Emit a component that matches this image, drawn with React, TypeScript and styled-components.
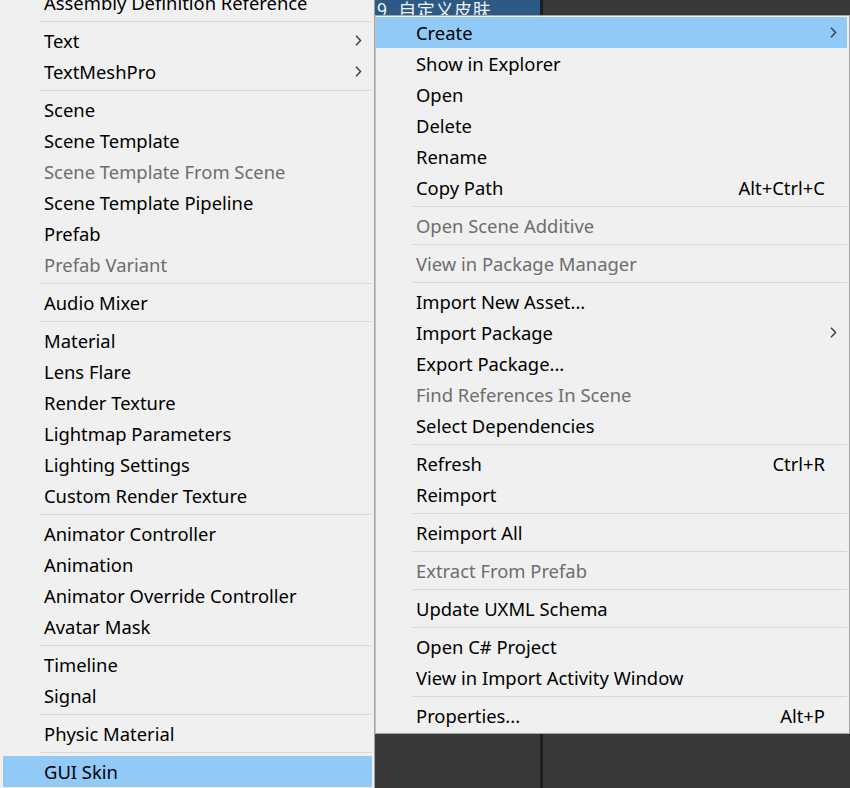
import React from "react";
import styled, { createGlobalStyle } from "styled-components";

const GlobalStyle = createGlobalStyle`
  html, body {
    margin: 0;
    padding: 0;
    background: #383838;
    overflow: hidden;
  }
  * { box-sizing: border-box; }
`;

type Entry =
  | { sep: true }
  | { label: string; disabled?: boolean; shortcut?: string; submenu?: boolean; active?: boolean };

const leftItems: Entry[] = [
  { label: "Assembly Definition Reference" },
  { sep: true },
  { label: "Text", submenu: true },
  { label: "TextMeshPro", submenu: true },
  { sep: true },
  { label: "Scene" },
  { label: "Scene Template" },
  { label: "Scene Template From Scene", disabled: true },
  { label: "Scene Template Pipeline" },
  { label: "Prefab" },
  { label: "Prefab Variant", disabled: true },
  { sep: true },
  { label: "Audio Mixer" },
  { sep: true },
  { label: "Material" },
  { label: "Lens Flare" },
  { label: "Render Texture" },
  { label: "Lightmap Parameters" },
  { label: "Lighting Settings" },
  { label: "Custom Render Texture" },
  { sep: true },
  { label: "Animator Controller" },
  { label: "Animation" },
  { label: "Animator Override Controller" },
  { label: "Avatar Mask" },
  { sep: true },
  { label: "Timeline" },
  { label: "Signal" },
  { sep: true },
  { label: "Physic Material" },
  { sep: true },
  { label: "GUI Skin", active: true },
];

const rightItems: Entry[] = [
  { label: "Create", submenu: true, active: true },
  { label: "Show in Explorer" },
  { label: "Open" },
  { label: "Delete" },
  { label: "Rename" },
  { label: "Copy Path", shortcut: "Alt+Ctrl+C" },
  { sep: true },
  { label: "Open Scene Additive", disabled: true },
  { sep: true },
  { label: "View in Package Manager", disabled: true },
  { sep: true },
  { label: "Import New Asset..." },
  { label: "Import Package", submenu: true },
  { label: "Export Package..." },
  { label: "Find References In Scene", disabled: true },
  { label: "Select Dependencies" },
  { sep: true },
  { label: "Refresh", shortcut: "Ctrl+R" },
  { label: "Reimport" },
  { sep: true },
  { label: "Reimport All" },
  { sep: true },
  { label: "Extract From Prefab", disabled: true },
  { sep: true },
  { label: "Update UXML Schema" },
  { sep: true },
  { label: "Open C# Project" },
  { label: "View in Import Activity Window" },
  { sep: true },
  { label: "Properties...", shortcut: "Alt+P" },
];

const Page = styled.div`
  display: flex;
  width: 850px;
  height: 788px;
  overflow: hidden;
  font-family: "Noto Sans", "Open Sans", sans-serif;
`;

const LeftMenu = styled.div`
  width: 375px;
  flex: none;
  height: 788px;
  overflow: hidden;
  background: #f0f0f0;
  border-right: 1px solid #a3a3a3;
  padding: 0 2px 0 3px;
`;

const MenuList = styled.div<{ $offset: number }>`
  display: flex;
  flex-direction: column;
  margin-top: ${(p) => p.$offset}px;
`;

const RightColumn = styled.div`
  flex: 1;
  display: flex;
  flex-direction: column;
  min-width: 0;
`;

const TopStrip = styled.div`
  height: 15px;
  flex: none;
  display: flex;
  overflow: hidden;
`;

const Tab = styled.div`
  width: 165px;
  background: #2c5a85;
  color: #eef3f8;
  font-family: "Noto Sans CJK SC", "Noto Sans", sans-serif;
  font-size: 18px;
  line-height: 18px;
  letter-spacing: 0.6px;
  word-spacing: 6px;
  padding: 0 0 0 2px;
  white-space: nowrap;
  overflow: hidden;
`;

const Divider = styled.div`
  width: 3px;
  background: #1e1e1e;
`;

const DarkPane = styled.div`
  flex: 1;
  background: #383838;
`;

const RightMenu = styled.div`
  flex: none;
  background: #f0f0f0;
  border: 1px solid #a3a3a3;
  border-left-color: #c4c4c4;
  padding: 1px 2px 2px 0;
  display: flex;
  flex-direction: column;
`;

const BottomArea = styled.div`
  flex: 1;
  display: flex;
`;

const LeftPane = styled.div`
  width: 165px;
  background: #383838;
`;

const Row = styled.div<{ $active?: boolean; $disabled?: boolean; $indent: number }>`
  height: 31px;
  flex: none;
  display: flex;
  align-items: center;
  padding: 0 10px 0 ${(p) => p.$indent}px;
  background: ${(p) => (p.$active ? "#91c9f7" : "transparent")};
  color: ${(p) => (p.$disabled ? "#6d6d6d" : "#000000")};
  font-size: 18.4px;
  white-space: nowrap;
`;

const Label = styled.span`
  flex: 1;
`;

const Shortcut = styled.span`
  padding-right: 12px;
`;

const Separator = styled.div<{ $indent: number }>`
  height: 7px;
  flex: none;
  display: flex;
  align-items: center;
  padding-left: ${(p) => p.$indent}px;
  &::after {
    content: "";
    flex: 1;
    height: 1px;
    background: #d7d7d7;
  }
`;

const Arrow = () => (
  <svg width="7" height="11" viewBox="0 0 7 11">
    <polyline points="1,0.8 5.6,5.5 1,10.2" fill="none" stroke="#333" strokeWidth="1.3" />
  </svg>
);

const Menu = ({ items, indent, sepIndent }: { items: Entry[]; indent: number; sepIndent: number }) => (
  <>
    {items.map((it, i) =>
      "sep" in it ? (
        <Separator key={i} $indent={sepIndent} />
      ) : (
        <Row key={i} $active={it.active} $disabled={it.disabled} $indent={indent}>
          <Label>{it.label}</Label>
          {it.shortcut && <Shortcut>{it.shortcut}</Shortcut>}
          {it.submenu && <Arrow />}
        </Row>
      )
    )}
  </>
);

export default function App() {
  return (
    <>
      <GlobalStyle />
      <Page>
        <LeftMenu>
          <MenuList $offset={-13}>
            <Menu items={leftItems} indent={41} sepIndent={37} />
          </MenuList>
        </LeftMenu>
        <RightColumn>
          <TopStrip>
            <Tab>9 自定义皮肤</Tab>
            <Divider />
            <DarkPane />
          </TopStrip>
          <RightMenu>
            <Menu items={rightItems} indent={40} sepIndent={36} />
          </RightMenu>
          <BottomArea>
            <LeftPane />
            <Divider />
            <DarkPane />
          </BottomArea>
        </RightColumn>
      </Page>
    </>
  );
}
